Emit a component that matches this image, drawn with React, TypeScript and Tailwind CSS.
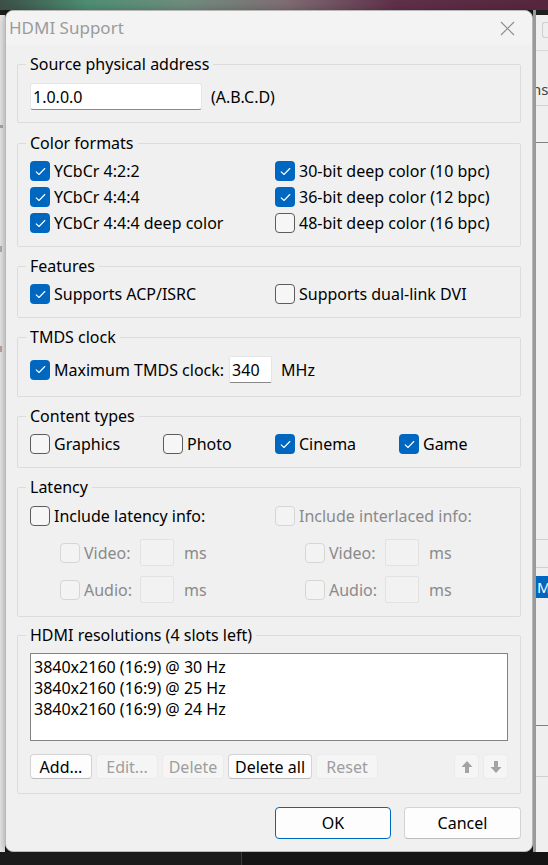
import type { ReactNode } from 'react'

function Box({ on, off }: { on?: boolean; off?: boolean }) {
  if (on) {
    return (
      <span className="flex h-[20px] w-[20px] shrink-0 items-center justify-center rounded-[4px] bg-[#0067c0]">
        <svg width="11" height="9" viewBox="0 0 11 9" fill="none">
          <path d="M1.2 4.8 L4 7.5 L9.8 1.5" stroke="#ffffff" strokeWidth="1.1" strokeLinecap="round" strokeLinejoin="round" />
        </svg>
      </span>
    )
  }
  return (
    <span
      className={`h-[20px] w-[20px] shrink-0 rounded-[4px] border ${
        off ? 'border-[#d6d6d6] bg-[#f3f3f3]' : 'border-[#5c5c5c] bg-[#f6f6f6]'
      }`}
    />
  )
}

function Check({ label, on, off, className = '' }: { label: string; on?: boolean; off?: boolean; className?: string }) {
  return (
    <div className={`flex h-[26px] items-center gap-[4px] whitespace-nowrap ${className}`}>
      <Box on={on} off={off} />
      <span className={off ? 'text-[#8a8a8a]' : 'text-black'}>{label}</span>
    </div>
  )
}

function Group({ title, className = '', children }: { title: string; className?: string; children: ReactNode }) {
  return (
    <div className={`relative rounded-[2px] border border-[#dcdcdc] px-[12px] ${className}`}>
      <span className="absolute -top-[11px] left-[8px] bg-[#f0f0f0] px-[4px] leading-[20px] text-black">{title}</span>
      {children}
    </div>
  )
}

function Btn({ label, off, className = '' }: { label: string; off?: boolean; className?: string }) {
  return (
    <div
      className={`flex h-[25px] items-center justify-center rounded-[4px] border ${
        off
          ? 'border-[#ebebeb] bg-[#f5f5f5] text-[#9e9e9e]'
          : 'border-[#d3d3d3] border-b-[#bdbdbd] bg-[#fdfdfd] text-black'
      } ${className}`}
    >
      {label}
    </div>
  )
}

function Arrow({ down }: { down?: boolean }) {
  return (
    <div className="flex h-[25px] w-[25px] items-center justify-center rounded-[4px] border border-[#ebebeb] bg-[#f5f5f5]">
      <svg width="12" height="14" viewBox="0 0 12 14" className={down ? 'rotate-180' : ''}>
        <path d="M6 1 L11.5 7 L8 7 L8 13 L4 13 L4 7 L0.5 7 Z" fill="#a3a3a3" />
      </svg>
    </div>
  )
}

function MsField({ label }: { label: string }) {
  return (
    <div className="flex h-[27px] items-center">
      <Box off />
      <span className="ml-[4px] w-[56px] text-[#8a8a8a]">{label}</span>
      <span className="h-[27px] w-[34px] rounded-[2px] border border-[#e2e2e2] bg-[#f2f2f2]" />
      <span className="ml-[10px] text-[#8a8a8a]">ms</span>
    </div>
  )
}

export default function App() {
  return (
    <div className="flex h-[865px] w-[548px] flex-col overflow-hidden bg-[#171717] font-['Noto_Sans',sans-serif] text-[16px] leading-[20px]">
      <div className="h-[10px] shrink-0 bg-[linear-gradient(90deg,#3b4f47_0%,#4d8e72_16%,#6f8b7e_34%,#7e6d73_52%,#60304a_72%,#55263e_100%)]" />
      <div className="flex h-[842px] shrink-0">
        <div className="flex w-[5px] shrink-0 flex-col bg-[#e9e9e9]">
          <div className="h-[5px] bg-[#1e1e1e]" />
          <div className="mt-[110px] h-[3px] w-[3px] bg-[#aaa]" />
          <div className="mt-[118px] h-[6px] w-[2px] bg-[#b0b0b0]" />
          <div className="mt-[94px] h-[6px] w-[2px] bg-[#c9a0a0]" />
        </div>

        <div className="flex w-[528px] shrink-0 flex-col rounded-[8px] border border-[#b8b8b8] bg-[#f0f0f0] shadow-[0_2px_10px_rgba(0,0,0,0.35)]">
          <div className="flex h-[34px] shrink-0 items-center justify-between rounded-t-[8px] bg-[#f3f3f3] pl-[3px] pr-[17px]">
            <span className="text-[17px] text-[#9b9b9b]">HDMI Support</span>
            <svg width="15" height="15" viewBox="0 0 15 15">
              <path d="M1 1 L14 14 M14 1 L1 14" stroke="#8e8e8e" strokeWidth="1.2" />
            </svg>
          </div>

          <div className="flex flex-col px-[11px]">
            <Group title="Source physical address" className="mt-[19px] h-[59px] pt-[18px]">
              <div className="flex items-center">
                <div className="flex h-[27px] w-[172px] items-center rounded-[3px] border border-[#e5e5e5] border-b-[#8a8a8a] bg-white px-[2px] text-black">
                  1.0.0.0
                </div>
                <span className="ml-[9px] text-black">(A.B.C.D)</span>
              </div>
            </Group>

            <Group title="Color formats" className="mt-[20px] h-[104px] pt-[14px]">
              <div className="grid grid-cols-[245px_1fr]">
                <Check label="YCbCr 4:2:2" on />
                <Check label="30-bit deep color (10 bpc)" on />
                <Check label="YCbCr 4:4:4" on />
                <Check label="36-bit deep color (12 bpc)" on />
                <Check label="YCbCr 4:4:4 deep color" on />
                <Check label="48-bit deep color (16 bpc)" />
              </div>
            </Group>

            <Group title="Features" className="mt-[19px] h-[52px] pt-[14px]">
              <div className="grid grid-cols-[245px_1fr]">
                <Check label="Supports ACP/ISRC" on />
                <Check label="Supports dual-link DVI" />
              </div>
            </Group>

            <Group title="TMDS clock" className="mt-[19px] h-[60px] pt-[18px]">
              <div className="flex h-[27px] items-center">
                <Check label="Maximum TMDS clock:" on />
                <div className="ml-[5px] flex h-[27px] w-[43px] items-center rounded-[2px] border border-[#e5e5e5] border-b-[#8a8a8a] bg-white px-[2px] text-black">
                  340
                </div>
                <span className="ml-[9px] text-black">MHz</span>
              </div>
            </Group>

            <Group title="Content types" className="mt-[19px] h-[52px] pt-[14px]">
              <div className="grid grid-cols-[133px_112px_124px_1fr]">
                <Check label="Graphics" />
                <Check label="Photo" />
                <Check label="Cinema" on />
                <Check label="Game" on />
              </div>
            </Group>

            <Group title="Latency" className="mt-[19px] h-[130px] pt-[15px]">
              <div className="grid grid-cols-[245px_1fr]">
                <Check label="Include latency info:" />
                <Check label="Include interlaced info:" off />
                <div className="mt-[10px] pl-[30px]">
                  <MsField label="Video:" />
                </div>
                <div className="mt-[10px] pl-[30px]">
                  <MsField label="Video:" />
                </div>
                <div className="mt-[10px] pl-[30px]">
                  <MsField label="Audio:" />
                </div>
                <div className="mt-[10px] pl-[30px]">
                  <MsField label="Audio:" />
                </div>
              </div>
            </Group>

            <Group title="HDMI resolutions (4 slots left)" className="mt-[18px] h-[159px] pt-[17px]">
              <div className="flex h-[88px] flex-col border border-[#838383] bg-white px-[3px] pt-[3px] leading-[21px] text-black">
                <span>3840x2160 (16:9) @ 30 Hz</span>
                <span>3840x2160 (16:9) @ 25 Hz</span>
                <span>3840x2160 (16:9) @ 24 Hz</span>
              </div>
              <div className="mt-[13px] flex gap-[4px]">
                <Btn label="Add..." className="w-[62px]" />
                <Btn label="Edit..." off className="w-[62px]" />
                <Btn label="Delete" off className="w-[62px]" />
                <Btn label="Delete all" className="w-[84px]" />
                <Btn label="Reset" off className="w-[62px]" />
                <div className="flex-1" />
                <Arrow />
                <Arrow down />
              </div>
            </Group>

            <div className="mt-[13px] flex justify-end gap-[13px]">
              <div className="flex h-[32px] w-[116px] items-center justify-center rounded-[4px] border border-[#0067c0] bg-[#fdfdfd] text-black">
                OK
              </div>
              <div className="flex h-[32px] w-[117px] items-center justify-center rounded-[4px] border border-[#d3d3d3] border-b-[#bdbdbd] bg-[#fdfdfd] text-black">
                Cancel
              </div>
            </div>
          </div>
        </div>

        <div className="flex min-w-0 flex-1 flex-col overflow-hidden border-l-[3px] border-l-[#9a9a9a] bg-[#efefef]">
          <div className="h-[5px] shrink-0 bg-[#1f1f1f]" />
          <div className="ml-[6px] mt-[7px] h-[16px] w-[10px] shrink-0 rounded-l-[3px] border border-r-0 border-[#cfcfcf]" />
          <div className="mt-[12px] h-[1px] shrink-0 bg-[#d8d8d8]" />
          <span className="-ml-[4px] mt-[28px] whitespace-nowrap text-[15px] leading-[20px] text-[#444]">ns</span>
          <div className="mt-[6px] h-[1px] shrink-0 bg-[#d0d0d0]" />
          <div className="mt-[36px] h-[1px] shrink-0 bg-[#808080]" />
          <div className="mt-[396px] h-[1px] shrink-0 bg-[#d0d0d0]" />
          <div className="mt-[27px] h-[1px] shrink-0 bg-[#d0d0d0]" />
          <div className="mt-[8px] h-[22px] shrink-0 bg-[#0067c0] pl-[1px] text-[15px] leading-[22px] text-white">M</div>
          <div className="mt-[127px] h-[1px] shrink-0 bg-[#808080]" />
          <div className="mt-[50px] h-[1px] shrink-0 bg-[#d0d0d0]" />
        </div>
      </div>
      <div className="flex flex-1">
        <div className="w-[241px] bg-[#1a1a1a]" />
        <div className="w-[1px] bg-[#3a3a3a]" />
        <div className="flex-1 bg-[#141414]" />
      </div>
    </div>
  )
}
